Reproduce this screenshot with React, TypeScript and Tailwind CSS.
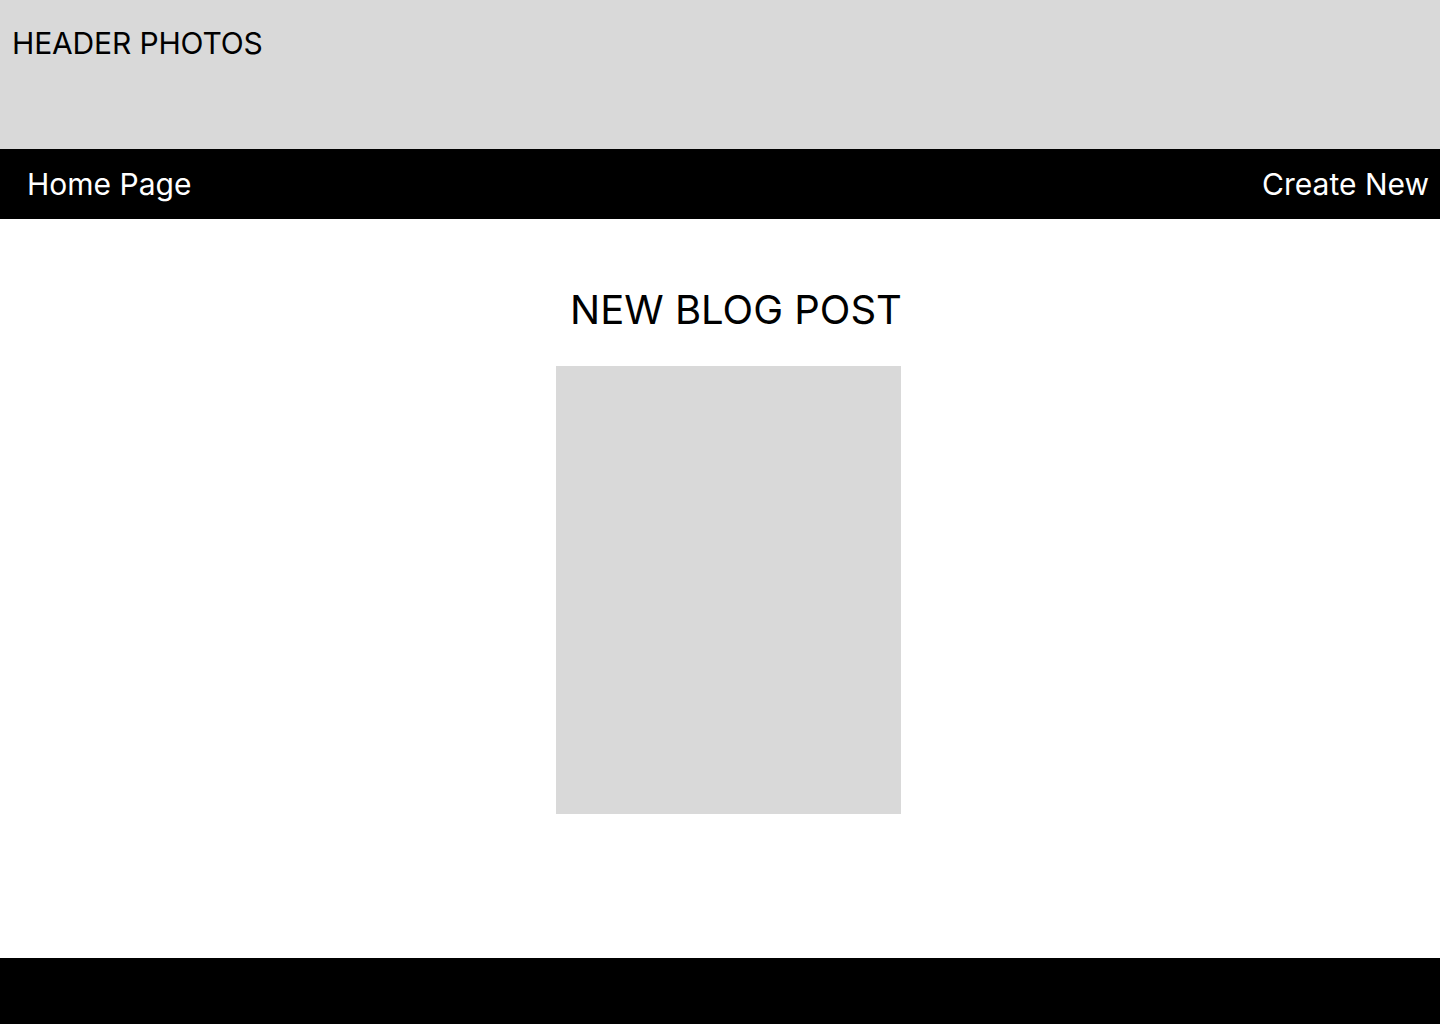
import React from "react";

const App = () => {
  return (
    <div
      className="flex flex-col min-h-screen bg-white text-black"
      style={{ fontFamily: "Inter, 'Noto Sans', sans-serif" }}
    >
      {/* Header */}
      <header className="h-[149px] bg-[#d9d9d9] pl-3 pt-[25px]">
        <h1 className="text-[30px] leading-[36px] font-normal tracking-[-0.15px]">HEADER PHOTOS</h1>
      </header>

      {/* Nav */}
      <nav className="h-[70px] bg-black flex items-center justify-between pl-[27px] pr-[11px] text-white">
        <a href="#" className="text-[30px] leading-[36px]">
          Home Page
        </a>
        <a href="#" className="text-[30px] leading-[36px]">
          Create New
        </a>
      </nav>

      {/* Main */}
      <main className="flex-1 flex flex-col items-center pt-[67px]">
        <h2 className="text-[40px] leading-[48px] font-normal ml-[32px]">
          NEW BLOG POST
        </h2>
        <div className="mt-[32px] w-[345px] h-[448px] bg-[#d9d9d9] ml-[17px]" />
      </main>

      {/* Footer */}
      <footer className="h-[66px] bg-black" />
    </div>
  );
};

export default App;
